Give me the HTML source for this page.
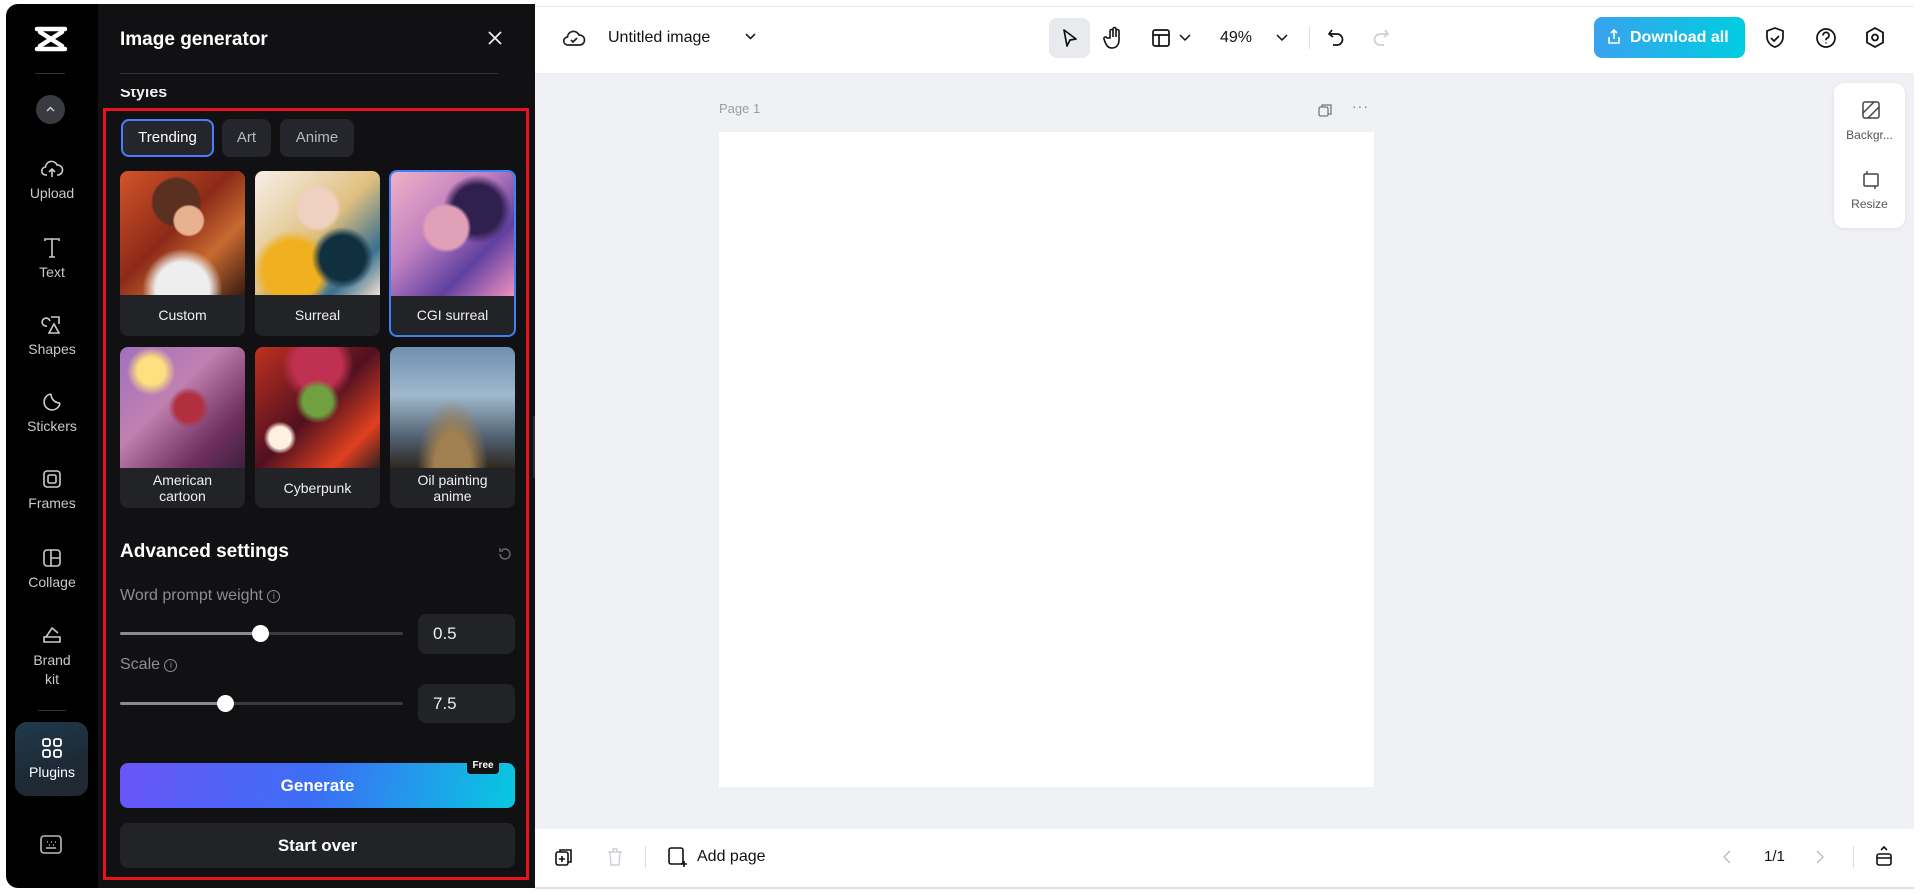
<!DOCTYPE html>
<html><head><meta charset="utf-8"><style>
*{box-sizing:border-box;margin:0;padding:0}
body{width:1920px;height:893px;background:#fff;font-family:"Liberation Sans",sans-serif;position:relative;overflow:hidden}
.a{position:absolute}
.sb{left:6px;top:4px;width:92px;height:884px;background:#000;border-radius:12px 0 0 12px}
.si{position:absolute;left:6px;width:92px;text-align:center;color:#c9cace;font-size:14px}
.si svg{display:block;margin:0 auto 4px}
.panel{left:98px;top:4px;width:437px;height:884px;background:#111114}
.card{position:absolute;width:125px;border-radius:8px;background:#222327;overflow:hidden;color:#f0f0f0;font-size:14px;text-align:center}
.card .im{height:124px}
.tab{position:absolute;top:119px;height:38px;border-radius:8px;background:#25262b;color:#b8bac0;font-size:15px;line-height:38px;text-align:center}
</style></head><body>
<div class="a sb"></div>
<svg class="a" style="left:34px;top:26px" width="34" height="26" viewBox="0 0 34 26"><path d="M3 3h28M3 23h28M6 6l22 14M28 6L6 20" stroke="#fff" stroke-width="4.5" fill="none" stroke-linecap="round"/></svg>
<div class="a" style="left:35px;top:73px;width:30px;height:1px;background:#333"></div>
<div class="a" style="left:36px;top:95px;width:29px;height:29px;border-radius:50%;background:#3a3b40"></div>
<svg class="a" style="left:44px;top:103px" width="13" height="13"><path d="M3 8l3.5-3.5L10 8" stroke="#ccc" stroke-width="1.5" fill="none"/></svg>
<div class="si" style="top:157px"><svg width="24" height="24" viewBox="0 0 24 24" fill="none" stroke="#ccc" stroke-width="1.6"><path d="M7 18H6a4 4 0 0 1-.5-8A6 6 0 0 1 17 8a4.5 4.5 0 0 1 1 10h-1M12 20v-8M9 15l3-3 3 3"/></svg>Upload</div>
<div class="si" style="top:236px"><svg width="24" height="24" viewBox="0 0 24 24" fill="none" stroke="#ccc" stroke-width="1.6"><path d="M5 5V3h14v2M12 3v18M9 21h6"/></svg>Text</div>
<div class="si" style="top:313px"><svg width="24" height="24" viewBox="0 0 24 24" fill="none" stroke="#ccc" stroke-width="1.6"><path d="M10 8a4 4 0 1 0-3 5M11 4h8v7M14 11l-5 9h10z"/></svg>Shapes</div>
<div class="si" style="top:390px"><svg width="24" height="24" viewBox="0 0 24 24" fill="none" stroke="#ccc" stroke-width="1.6"><path d="M20 13a8 8 0 1 1-9-9M11 4c0 5 4 9 9 9"/></svg>Stickers</div>
<div class="si" style="top:467px"><svg width="24" height="24" viewBox="0 0 24 24" fill="none" stroke="#ccc" stroke-width="1.6"><rect x="4" y="4" width="16" height="16" rx="3"/><rect x="8" y="8" width="8" height="8" rx="1.5"/></svg>Frames</div>
<div class="si" style="top:546px"><svg width="24" height="24" viewBox="0 0 24 24" fill="none" stroke="#ccc" stroke-width="1.6"><rect x="4" y="4" width="16" height="16" rx="3"/><path d="M11 4v16M11 12h9"/></svg>Collage</div>
<div class="si" style="top:623px;line-height:19px"><svg width="24" height="24" viewBox="0 0 24 24" fill="none" stroke="#ccc" stroke-width="1.6"><path d="M4 14h16v5H4zM6 14l6-9 6 5"/></svg>Brand<br>kit</div>
<div class="a" style="left:38px;top:710px;width:28px;height:1px;background:#333"></div>
<div class="a" style="left:15px;top:722px;width:73px;height:74px;border-radius:12px;background:linear-gradient(160deg,#1f3a4e,#1d2a36 60%,#232830)"></div>
<div class="si" style="top:736px;color:#fff"><svg width="24" height="24" viewBox="0 0 24 24" fill="none" stroke="#fff" stroke-width="1.8"><rect x="3" y="3" width="7" height="7" rx="2"/><rect x="14" y="3" width="7" height="7" rx="2"/><rect x="3" y="14" width="7" height="7" rx="2"/><rect x="14" y="14" width="7" height="7" rx="2"/></svg>Plugins</div>
<svg class="a" style="left:39px;top:834px" width="24" height="22" viewBox="0 0 24 22" fill="none" stroke="#bbb" stroke-width="1.6"><rect x="2" y="2" width="20" height="17" rx="3"/><path d="M7 14h10M8 8h1M12 8h1M16 8h1M10 11h1M14 11h1"/></svg>

<div class="a panel"></div>
<div class="a" style="left:120px;top:29px;color:#fff;font-size:19px;font-weight:bold">Image generator</div>
<svg class="a" style="left:487px;top:30px" width="16" height="16"><path d="M2 2l12 12M14 2L2 14" stroke="#eee" stroke-width="1.8"/></svg>
<div class="a" style="left:120px;top:73px;width:378px;height:1px;background:#333"></div>
<div class="a" style="left:120px;top:89px;height:15px;overflow:hidden;width:100px"><div style="color:#eee;font-size:16px;font-weight:bold;margin-top:-5px">Styles</div></div>
<div class="a" style="left:103px;top:108px;width:426px;height:772px;border:3px solid #e8121c"></div>
<div class="tab" style="left:121px;width:93px;border:2px solid #4a7cff;color:#fff;line-height:34px">Trending</div>
<div class="tab" style="left:222px;width:49px">Art</div>
<div class="tab" style="left:280px;width:74px">Anime</div>

<div class="card" style="left:120px;top:171px;height:165px"><div class="im" style="background:radial-gradient(circle at 55% 40%,#e7b08e 0 14%,transparent 16%),radial-gradient(circle at 45% 25%,#5a3020 0 20%,transparent 22%),radial-gradient(circle at 50% 95%,#eee 0 20%,transparent 30%),linear-gradient(135deg,#d4542a,#8c2a18 45%,#c86a30 70%,#3a1a10)"></div><div style="line-height:40px">Custom</div></div>
<div class="card" style="left:255px;top:171px;height:165px"><div class="im" style="background:radial-gradient(circle at 50% 30%,#f0d0c0 0 18%,transparent 22%),radial-gradient(circle at 70% 70%,#103040 0 18%,transparent 25%),radial-gradient(circle at 30% 80%,#f0b020 0 22%,transparent 30%),linear-gradient(135deg,#f6efe9,#e0c080 50%,#3a7090 80%,#f2e0d0)"></div><div style="line-height:40px">Surreal</div></div>
<div class="card" style="left:389px;top:170px;height:167px;width:127px;border:2px solid #3b82f6"><div class="im" style="background:radial-gradient(circle at 45% 45%,#e0a0b8 0 22%,transparent 26%),radial-gradient(circle at 70% 30%,#302050 0 20%,transparent 28%),linear-gradient(135deg,#f0b0c8,#c080c0 40%,#6040a0 70%,#f090c0)"></div><div style="line-height:38px">CGI surreal</div></div>

<div class="card" style="left:120px;top:347px;height:161px"><div class="im" style="height:121px;background:radial-gradient(circle at 25% 20%,#ffe080 0 10%,transparent 18%),radial-gradient(circle at 55% 50%,#b03040 0 15%,transparent 22%),linear-gradient(135deg,#a070c0,#c080b0 40%,#703060 75%,#402040)"></div><div style="line-height:16px;padding-top:4px">American<br>cartoon</div></div>
<div class="card" style="left:255px;top:347px;height:161px"><div class="im" style="height:121px;background:radial-gradient(circle at 20% 75%,#fff0e0 0 8%,transparent 12%),radial-gradient(circle at 50% 45%,#70a040 0 16%,transparent 24%),radial-gradient(circle at 50% 15%,#c03050 0 20%,transparent 30%),linear-gradient(135deg,#c03020,#501020 50%,#e04020 80%,#302020)"></div><div style="line-height:40px">Cyberpunk</div></div>
<div class="card" style="left:390px;top:347px;height:161px"><div class="im" style="height:121px;background:radial-gradient(ellipse at 50% 100%,#a08050 0 20%,transparent 40%),linear-gradient(180deg,#7090b0,#a0b8cc 40%,#506070 75%,#302820)"></div><div style="line-height:16px;padding-top:4px">Oil painting<br>anime</div></div>

<div class="a" style="left:120px;top:541px;color:#fff;font-size:19px;font-weight:bold">Advanced settings</div>
<svg class="a" style="left:497px;top:546px" width="16" height="16" viewBox="0 0 16 16" fill="none" stroke="#666" stroke-width="1.5"><path d="M3 8a5 5 0 1 0 2-4M3 2v3h3"/></svg>
<div class="a" style="left:120px;top:587px;color:#8a8d93;font-size:16px">Word prompt weight <span style="display:inline-block;width:13px;height:13px;border:1.3px solid #8a8d93;border-radius:50%;font-size:9px;text-align:center;line-height:11px;vertical-align:1px">i</span></div>
<div class="a" style="left:120px;top:632px;width:283px;height:3px;background:#3a3b40;border-radius:2px"></div>
<div class="a" style="left:120px;top:632px;width:141px;height:3px;background:#8a8b90;border-radius:2px"></div>
<div class="a" style="left:252px;top:625px;width:17px;height:17px;border-radius:50%;background:#fff"></div>
<div class="a" style="left:418px;top:614px;width:97px;height:40px;border-radius:8px;background:#222327;color:#eee;font-size:17px;line-height:40px;padding-left:15px">0.5</div>
<div class="a" style="left:120px;top:656px;color:#8a8d93;font-size:16px">Scale <span style="display:inline-block;width:13px;height:13px;border:1.3px solid #8a8d93;border-radius:50%;font-size:9px;text-align:center;line-height:11px;vertical-align:1px">i</span></div>
<div class="a" style="left:120px;top:702px;width:283px;height:3px;background:#3a3b40;border-radius:2px"></div>
<div class="a" style="left:120px;top:702px;width:105px;height:3px;background:#8a8b90;border-radius:2px"></div>
<div class="a" style="left:217px;top:695px;width:17px;height:17px;border-radius:50%;background:#fff"></div>
<div class="a" style="left:418px;top:684px;width:97px;height:39px;border-radius:8px;background:#222327;color:#eee;font-size:17px;line-height:39px;padding-left:15px">7.5</div>
<div class="a" style="left:120px;top:763px;width:395px;height:45px;border-radius:8px;background:linear-gradient(100deg,#6a55f8,#3b6ff5 50%,#08c8e0);color:#fff;font-size:17px;font-weight:bold;text-align:center;line-height:45px">Generate</div>
<div class="a" style="left:467px;top:758px;width:32px;height:16px;border-radius:4px;background:#111;color:#fff;font-size:10px;font-weight:bold;text-align:center;line-height:16px">Free</div>
<div class="a" style="left:120px;top:823px;width:395px;height:45px;border-radius:8px;background:#222327;color:#fff;font-size:17px;font-weight:bold;text-align:center;line-height:45px">Start over</div>
<div class="a" style="left:533px;top:416px;width:10px;height:62px;border-radius:0 6px 6px 0;background:#2a2b30"></div>

<div class="a" style="left:535px;top:73px;width:1379px;height:756px;background:#eff1f4"></div>
<div class="a" style="left:535px;top:6px;width:1379px;height:1px;background:#e6e6e8"></div>
<div class="a" style="left:535px;top:887px;width:1379px;height:2px;background:#e0e0e2"></div>
<svg class="a" style="left:562px;top:27px" width="24" height="22" viewBox="0 0 24 22" fill="none" stroke="#222" stroke-width="1.7"><path d="M7 18H6a4 4 0 0 1-.5-8A6 6 0 0 1 17 8a4.5 4.5 0 0 1 1 10H7zM9 13l2 2 4-4"/></svg>
<div class="a" style="left:608px;top:29px;font-size:16px;color:#111">Untitled image</div>
<svg class="a" style="left:744px;top:32px" width="13" height="10"><path d="M2 2l4.5 4.5L11 2" stroke="#222" stroke-width="1.6" fill="none"/></svg>
<div class="a" style="left:1049px;top:18px;width:41px;height:40px;border-radius:8px;background:#e8eaee"></div>
<svg class="a" style="left:1060px;top:28px" width="20" height="21"><path d="M4 2l12 9-6 1-3 6z" stroke="#111" stroke-width="1.7" fill="none" stroke-linejoin="round"/></svg>
<svg class="a" style="left:1103px;top:26px" width="22" height="24" viewBox="0 0 22 24" fill="none" stroke="#111" stroke-width="1.6"><path d="M7 12V5a1.5 1.5 0 0 1 3 0v6V3a1.5 1.5 0 0 1 3 0v8V5a1.5 1.5 0 0 1 3 0v9c0 5-3 8-7 8s-5-2-7-6l-1-3a1.5 1.5 0 0 1 3-1z"/></svg>
<svg class="a" style="left:1151px;top:28px" width="20" height="20" fill="none" stroke="#111" stroke-width="1.7"><rect x="2" y="2" width="16" height="16" rx="2"/><path d="M2 7h16M8 7v11"/></svg>
<svg class="a" style="left:1179px;top:33px" width="12" height="9"><path d="M1 2l5 5 5-5" stroke="#111" stroke-width="1.5" fill="none"/></svg>
<div class="a" style="left:1220px;top:29px;font-size:16px;color:#111">49%</div>
<svg class="a" style="left:1276px;top:33px" width="12" height="9"><path d="M1 2l5 5 5-5" stroke="#111" stroke-width="1.5" fill="none"/></svg>
<div class="a" style="left:1309px;top:27px;width:1px;height:22px;background:#ddd"></div>
<svg class="a" style="left:1326px;top:27px" width="20" height="22" fill="none" stroke="#111" stroke-width="1.7"><path d="M6 3L3 7l4 3M3 7h8a5 5 0 0 1 0 11H7"/></svg>
<svg class="a" style="left:1371px;top:27px" width="20" height="22" fill="none" stroke="#ccd0d6" stroke-width="1.7"><path d="M14 3l3 4-4 3M17 7H9a5 5 0 0 0 0 11h4"/></svg>
<div class="a" style="left:1594px;top:17px;width:151px;height:41px;border-radius:8px;background:linear-gradient(90deg,#3aa2ef,#00cde0);color:#fff;font-size:16px;font-weight:bold;line-height:41px;padding-left:36px">Download all</div>
<svg class="a" style="left:1606px;top:28px" width="16" height="18" fill="none" stroke="#fff" stroke-width="1.6"><path d="M8 11V2M5 5l3-3 3 3M3 9v6h10V9"/></svg>
<svg class="a" style="left:1764px;top:26px" width="22" height="24" fill="none" stroke="#111" stroke-width="1.7"><path d="M11 2l8 3v6c0 5-4 9-8 10-4-1-8-5-8-10V5zM7 12l3 3 5-5"/></svg>
<svg class="a" style="left:1815px;top:27px" width="22" height="22" fill="none" stroke="#111" stroke-width="1.7"><circle cx="11" cy="11" r="9"/><path d="M8 8.5a3 3 0 1 1 4 2.7c-1 .4-1 1-1 2M11 15.5v1"/></svg>
<svg class="a" style="left:1864px;top:26px" width="22" height="24" fill="none" stroke="#111" stroke-width="1.8"><path d="M11 2l8 4.5v10L11 21l-8-4.5v-10z"/><circle cx="11" cy="11.5" r="3"/></svg>
<div class="a" style="left:719px;top:101px;font-size:13px;color:#9a9da3">Page 1</div>
<svg class="a" style="left:1317px;top:102px" width="16" height="16" fill="none" stroke="#777" stroke-width="1.3"><rect x="2" y="5" width="9" height="9" rx="1.5"/><path d="M5 5V3h9v9h-3"/></svg>
<div class="a" style="left:1352px;top:98px;font-size:14px;color:#777;letter-spacing:1px">···</div>
<div class="a" style="left:719px;top:132px;width:655px;height:655px;background:#fff"></div>
<div class="a" style="left:1834px;top:83px;width:71px;height:145px;border-radius:10px;background:#fff;box-shadow:0 1px 4px rgba(0,0,0,.08)"></div>
<svg class="a" style="left:1861px;top:100px" width="20" height="20" fill="none" stroke="#444" stroke-width="1.5"><rect x="2" y="2" width="16" height="16" rx="2"/><path d="M2 13L13 2M7 18L18 7"/></svg>
<div class="a" style="left:1834px;top:128px;width:71px;text-align:center;font-size:12px;color:#555">Backgr...</div>
<svg class="a" style="left:1861px;top:170px" width="20" height="20" fill="none" stroke="#444" stroke-width="1.5"><rect x="3" y="4" width="14" height="12" rx="1"/><path d="M6 1v3M14 16v3"/></svg>
<div class="a" style="left:1834px;top:197px;width:71px;text-align:center;font-size:12px;color:#555">Resize</div>
<svg class="a" style="left:554px;top:847px" width="20" height="20" fill="none" stroke="#111" stroke-width="1.6"><rect x="2" y="5" width="12" height="13" rx="2"/><path d="M6 5V3h11v12h-3M8 9v6M5 12h6"/></svg>
<svg class="a" style="left:606px;top:847px" width="18" height="20" fill="none" stroke="#cdd1d8" stroke-width="1.5"><path d="M2 5h14M7 5V2h4v3M4 5l1 13h8l1-13"/></svg>
<div class="a" style="left:645px;top:846px;width:1px;height:22px;background:#ddd"></div>
<svg class="a" style="left:667px;top:846px" width="22" height="22" fill="none" stroke="#111" stroke-width="1.6"><rect x="2" y="2" width="14" height="16" rx="2"/><path d="M17 15v6M14 18h6"/></svg>
<div class="a" style="left:697px;top:848px;font-size:16px;color:#111">Add page</div>
<svg class="a" style="left:1721px;top:849px" width="12" height="16"><path d="M9 2L3 8l6 6" stroke="#bbb" stroke-width="1.4" fill="none"/></svg>
<div class="a" style="left:1764px;top:848px;font-size:15px;color:#111">1/1</div>
<svg class="a" style="left:1814px;top:849px" width="12" height="16"><path d="M3 2l6 6-6 6" stroke="#bbb" stroke-width="1.4" fill="none"/></svg>
<div class="a" style="left:1853px;top:846px;width:1px;height:22px;background:#ddd"></div>
<svg class="a" style="left:1874px;top:845px" width="20" height="22" fill="none" stroke="#111" stroke-width="1.6"><rect x="3" y="9" width="14" height="11" rx="2"/><path d="M3 13h14M7 5l3-3 3 3"/></svg>
</body></html>
